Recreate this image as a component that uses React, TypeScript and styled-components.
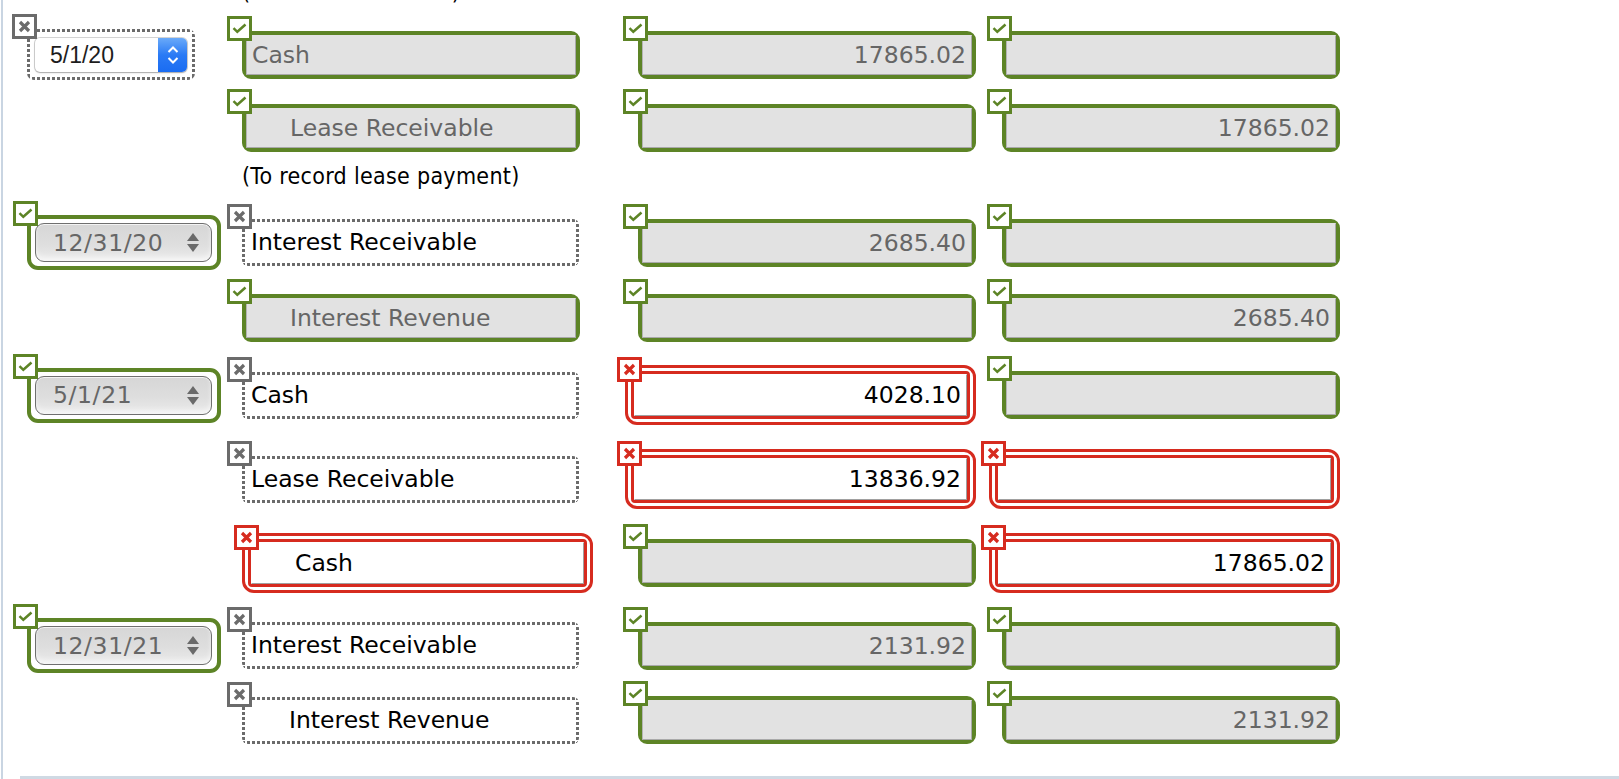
import React from 'react';
import styled, { createGlobalStyle, css } from 'styled-components';

const GREEN = '#5d8426';
const RED = '#d62b1f';
const GREY = '#6b6b6b';

type Mark = 'correct' | 'incorrect' | 'ungraded';

interface EntryData {
  text?: string;
  mark: Mark;
  indent?: boolean;
}

interface DateData {
  value: string;
  mark: Mark;
}

interface LineData {
  kind: 'line';
  space: number;
  date?: DateData;
  account: EntryData;
  debit: EntryData;
  credit: EntryData;
}

interface NoteData {
  kind: 'note';
  space: number;
  text: string;
}

const journal: Array<LineData | NoteData> = [
  { kind: 'note', space: 0, text: '(To record the lease)' },
  {
    kind: 'line',
    space: 24,
    date: { value: '5/1/20', mark: 'ungraded' },
    account: { text: 'Cash', mark: 'correct' },
    debit: { text: '17865.02', mark: 'correct' },
    credit: { mark: 'correct' },
  },
  {
    kind: 'line',
    space: 24,
    account: { text: 'Lease Receivable', mark: 'correct', indent: true },
    debit: { mark: 'correct' },
    credit: { text: '17865.02', mark: 'correct' },
  },
  { kind: 'note', space: 11, text: '(To record lease payment)' },
  {
    kind: 'line',
    space: 26,
    date: { value: '12/31/20', mark: 'correct' },
    account: { text: 'Interest Receivable', mark: 'ungraded' },
    debit: { text: '2685.40', mark: 'correct' },
    credit: { mark: 'correct' },
  },
  {
    kind: 'line',
    space: 24,
    account: { text: 'Interest Revenue', mark: 'correct', indent: true },
    debit: { mark: 'correct' },
    credit: { text: '2685.40', mark: 'correct' },
  },
  {
    kind: 'line',
    space: 23,
    date: { value: '5/1/21', mark: 'correct' },
    account: { text: 'Cash', mark: 'ungraded' },
    debit: { text: '4028.10', mark: 'incorrect' },
    credit: { mark: 'correct' },
  },
  {
    kind: 'line',
    space: 24,
    account: { text: 'Lease Receivable', mark: 'ungraded' },
    debit: { text: '13836.92', mark: 'incorrect' },
    credit: { mark: 'incorrect' },
  },
  {
    kind: 'line',
    space: 24,
    account: { text: 'Cash', mark: 'incorrect', indent: true },
    debit: { mark: 'correct' },
    credit: { text: '17865.02', mark: 'incorrect' },
  },
  {
    kind: 'line',
    space: 25,
    date: { value: '12/31/21', mark: 'correct' },
    account: { text: 'Interest Receivable', mark: 'ungraded' },
    debit: { text: '2131.92', mark: 'correct' },
    credit: { mark: 'correct' },
  },
  {
    kind: 'line',
    space: 23,
    account: { text: 'Interest Revenue', mark: 'ungraded', indent: true },
    debit: { mark: 'correct' },
    credit: { text: '2131.92', mark: 'correct' },
  },
];

const GlobalStyle = createGlobalStyle`
  html, body {
    margin: 0;
    padding: 0;
    background: #fff;
    overflow: hidden;
  }
  body {
    font-family: "DejaVu Sans", Verdana, sans-serif;
  }
`;

/* square-dot border, drawn as four striped edges */
const dots = css`
  border: 3px solid transparent;
  background-color: #fff;
  background-origin: border-box;
  background-clip: border-box;
  background-repeat: no-repeat;
  background-image: repeating-linear-gradient(90deg, ${GREY} 0 3px, transparent 3px 5px),
    repeating-linear-gradient(90deg, ${GREY} 0 3px, transparent 3px 5px),
    repeating-linear-gradient(180deg, ${GREY} 0 3px, transparent 3px 5px),
    repeating-linear-gradient(180deg, ${GREY} 0 3px, transparent 3px 5px);
  background-size: 100% 3px, 100% 3px, 3px 100%, 3px 100%;
  background-position: left top, left bottom, left top, right top;
`;

const Page = styled.div`
  box-sizing: border-box;
  height: 779px;
  margin-left: 1px;
  padding-left: 24px;
  border-left: 2px solid #c9d5e2;
  overflow: hidden;
`;

const Sheet = styled.div`
  display: flex;
  flex-direction: column;
  margin-top: -21px;
`;

const Row = styled.div<{ $space: number }>`
  display: grid;
  grid-template-columns: 215px 384px 350px 364px;
  align-items: center;
  margin-top: ${p => p.$space}px;
`;

const Cell = styled.div<{ $end?: boolean }>`
  display: flex;
  justify-content: ${p => (p.$end ? 'flex-end' : 'flex-start')};
`;

const Note = styled.div<{ $space: number }>`
  margin-top: ${p => p.$space}px;
  margin-left: 215px;
  height: 26px;
  line-height: 26px;
  font-family: "DejaVu Sans Condensed", "DejaVu Sans", sans-serif;
  font-size: 23px;
  letter-spacing: 0.3px;
  color: #000;
  white-space: nowrap;
`;

const Rule = styled.div`
  height: 3px;
  margin: 32px 0 0 -7px;
  background: #cfd9e3;
`;

/* graded wrapper round an answer field */
const Frame = styled.div<{ $mark: Mark }>`
  position: relative;
  box-sizing: border-box;
  ${p =>
    p.$mark === 'correct' &&
    css`
      border: 4px solid ${GREEN};
      border-radius: 9px;
    `}
  ${p =>
    p.$mark === 'ungraded' &&
    css`
      ${dots};
      border-radius: 6px;
    `}
  ${p =>
    p.$mark === 'incorrect' &&
    css`
      border: 3px solid ${RED};
      border-radius: 12px;
      padding: 3px;
    `}
`;

const Ring = styled.div`
  border: 3px solid ${RED};
  border-radius: 4px;
`;

const fieldSize = { correct: [330, 40], ungraded: [331, 41], incorrect: [333, 42] };

const Field = styled.div<{ $mark: Mark; $right?: boolean; $indent?: boolean }>`
  box-sizing: border-box;
  width: ${p => fieldSize[p.$mark][0]}px;
  height: ${p => fieldSize[p.$mark][1]}px;
  line-height: ${p => fieldSize[p.$mark][1] - 2}px;
  padding: 0 5px 0 ${p => (p.$indent ? 43 : 5)}px;
  font-size: 23.5px;
  text-align: ${p => (p.$right ? 'right' : 'left')};
  white-space: nowrap;
  overflow: hidden;
  border: 1px solid transparent;
  ${p =>
    p.$mark === 'correct' &&
    css`
      background: #e2e2e2;
      color: #666;
      border-color: #e2e2e2 #a9a9a9 #a9a9a9 #b4b4b4;
    `}
  ${p =>
    p.$mark === 'incorrect' &&
    css`
      background: #fff;
      color: #000;
      border-color: #fff #a0a0a0 #a0a0a0 #fff;
    `}
  ${p =>
    p.$mark === 'ungraded' &&
    css`
      background: #fff;
      color: #000;
    `}
`;

const badgeColor = { correct: GREEN, incorrect: RED, ungraded: GREY };

const Badge = styled.span<{ $mark: Mark; $inset: number }>`
  position: absolute;
  z-index: 2;
  top: ${p => p.$inset}px;
  left: ${p => p.$inset}px;
  box-sizing: border-box;
  width: 25px;
  height: 25px;
  display: flex;
  align-items: center;
  justify-content: center;
  background: #fff;
  border: 3px solid ${p => badgeColor[p.$mark]};
`;

const DateFrame = styled.div<{ $mark: Mark }>`
  position: relative;
  box-sizing: border-box;
  ${p =>
    p.$mark === 'correct'
      ? css`
          border: 4px solid ${GREEN};
          border-radius: 11px;
          padding: 4px 5px 4px 4px;
        `
      : css`
          ${dots};
          border-radius: 7px;
          padding: 6px 5px 5px 5px;
        `}
`;

/* locked date picker, grey glossy pill */
const GlossySelect = styled.div`
  box-sizing: border-box;
  width: 177px;
  height: 39px;
  display: flex;
  align-items: center;
  justify-content: space-between;
  padding: 0 12px 0 17px;
  border: 1px solid #6f6f6f;
  border-radius: 9px;
  background: linear-gradient(#d6d6d6, #dedede 55%, #ebebeb);
  box-shadow: inset 0 1px 0 rgba(255, 255, 255, 0.7), inset 0 -4px 5px rgba(255, 255, 255, 0.55);
  font-size: 23.5px;
  letter-spacing: 0.6px;
  color: #666;
`;

/* editable date picker with the blue stepper */
const NativeSelect = styled.div`
  box-sizing: border-box;
  width: 152px;
  height: 34px;
  display: flex;
  border-radius: 5px;
  background: #fff;
  box-shadow: 0 0 0 1px rgba(0, 0, 0, 0.16), 0 1px 2px rgba(0, 0, 0, 0.22);
  font-family: "Liberation Sans", Arial, sans-serif;
  font-size: 23px;
  color: #1d1d1d;
`;

const NativeValue = styled.span`
  flex: 1;
  padding-left: 15px;
  line-height: 34px;
`;

const Stepper = styled.span`
  width: 29px;
  display: flex;
  align-items: center;
  justify-content: center;
  border-radius: 0 5px 5px 0;
  background: linear-gradient(#6aaaf9, #2a7af5 50%, #1a6cf2);
`;

const CheckIcon = () => (
  <svg width="15" height="11" viewBox="0 0 15 11">
    <polyline points="1.5,5.2 5.3,8.8 13.5,1.5" fill="none" stroke={GREEN} strokeWidth="2.5" />
  </svg>
);

const CrossIcon = ({ color }: { color: string }) => (
  <svg width="13" height="13" viewBox="0 0 13 13">
    <path d="M2 2 L11 11 M11 2 L2 11" stroke={color} strokeWidth="3.2" strokeLinecap="butt" />
  </svg>
);

const Mark = ({ mark, inset }: { mark: Mark; inset: number }) => (
  <Badge $mark={mark} $inset={inset}>
    {mark === 'correct' ? <CheckIcon /> : <CrossIcon color={badgeColor[mark]} />}
  </Badge>
);

const badgeInset = (mark: Mark): number => (mark === 'incorrect' ? -11 : mark === 'correct' ? -19 : -18);

const Answer = ({ entry, right }: { entry: EntryData; right?: boolean }) => {
  const field = (
    <Field $mark={entry.mark} $right={right} $indent={entry.indent}>
      {entry.text}
    </Field>
  );
  return (
    <Frame $mark={entry.mark}>
      <Mark mark={entry.mark} inset={badgeInset(entry.mark)} />
      {entry.mark === 'incorrect' ? <Ring>{field}</Ring> : field}
    </Frame>
  );
};

const DatePicker = ({ date }: { date: DateData }) => (
  <DateFrame $mark={date.mark}>
    <Mark mark={date.mark} inset={-18} />
    {date.mark === 'correct' ? (
      <GlossySelect>
        <span>{date.value}</span>
        <svg width="12" height="19" viewBox="0 0 12 19">
          <polygon points="0,8 6,0 12,8" fill="#6a6a6a" />
          <polygon points="0,11 12,11 6,19" fill="#6a6a6a" />
        </svg>
      </GlossySelect>
    ) : (
      <NativeSelect>
        <NativeValue>{date.value}</NativeValue>
        <Stepper>
          <svg width="14" height="24" viewBox="0 0 14 24">
            <polyline points="2.5,9 7,4.5 11.5,9" fill="none" stroke="#fff" strokeWidth="2" />
            <polyline points="2.5,15 7,19.5 11.5,15" fill="none" stroke="#fff" strokeWidth="2" />
          </svg>
        </Stepper>
      </NativeSelect>
    )}
  </DateFrame>
);

const App = () => (
  <>
    <GlobalStyle />
    <Page>
      <Sheet>
        {journal.map((item, i) =>
          item.kind === 'note' ? (
            <Note key={i} $space={item.space}>
              {item.text}
            </Note>
          ) : (
            <Row key={i} $space={item.space}>
              <Cell>{item.date && <DatePicker date={item.date} />}</Cell>
              <Cell>
                <Answer entry={item.account} />
              </Cell>
              <Cell $end>
                <Answer entry={item.debit} right />
              </Cell>
              <Cell $end>
                <Answer entry={item.credit} right />
              </Cell>
            </Row>
          ),
        )}
        <Rule />
      </Sheet>
    </Page>
  </>
);

export default App;
